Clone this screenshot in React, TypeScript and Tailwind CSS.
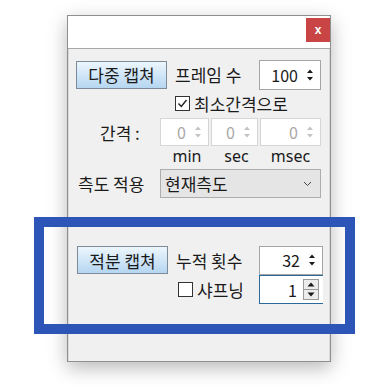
import React from "react";

const kr = { fontFamily: '"Noto Sans CJK KR", "Noto Sans", sans-serif' };

function Arrows({ color = "#1a1a1a" }: { color?: string }) {
  return (
    <svg width="8" height="16" viewBox="0 0 8 16" className="shrink-0">
      <path d="M1 6 L4 2.5 L7 6 Z" fill={color} />
      <path d="M1 10 L4 13.5 L7 10 Z" fill={color} />
    </svg>
  );
}

function Spinner({ value, width, disabled = false }: { value: string; width: string; disabled?: boolean }) {
  return (
    <div
      className={`flex h-full items-center justify-end gap-[8px] border bg-white pr-[6px] text-[16px] ${width} ${
        disabled ? "border-[#d6d6d6] text-[#a8a8a8]" : "border-[#a5a5a5] text-[#1a1a1a]"
      }`}
    >
      <span className="leading-none">{value}</span>
      <Arrows color={disabled ? "#c4c4c4" : "#1a1a1a"} />
    </div>
  );
}

function BlueButton({ label }: { label: string }) {
  return (
    <button className="flex h-[28px] w-[91px] items-center justify-center border border-[#7d8a97] bg-gradient-to-b from-[#edf6fd] to-[#b5d6f1] text-[17px] leading-none text-[#1a1a1a]">
      {label}
    </button>
  );
}

function CheckBox({ checked }: { checked: boolean }) {
  return (
    <span className="flex h-[15px] w-[15px] shrink-0 items-center justify-center border border-[#333] bg-white">
      {checked && (
        <svg width="11" height="11" viewBox="0 0 11 11">
          <path d="M1.5 5.5 L4.3 8.5 L9.5 2" fill="none" stroke="#222" strokeWidth="1.4" />
        </svg>
      )}
    </span>
  );
}

export default function App() {
  return (
    <div className="relative h-[385px] w-[386px] overflow-hidden bg-white" style={kr}>
      <div className="ml-[67px] mt-[15px] flex h-[347px] w-[264px] flex-col border border-[#8f8f8f] bg-[#f0f0f0] shadow-[0_6px_18px_rgba(0,0,0,0.28)]">
        {/* title bar */}
        <div className="flex h-[33px] items-start justify-end border-b border-[#a8a8a8] bg-white pt-[2px]">
          <div className="flex h-[24px] w-[24px] items-center justify-center bg-[#c94444] text-[12px] font-bold leading-none text-white" style={{ fontFamily: '"Liberation Sans", sans-serif' }}>
            x
          </div>
        </div>

        <div className="flex flex-1 flex-col border-x border-[#dadada] text-[#1a1a1a]">
          {/* 다중 캡쳐 row */}
          <div className="mt-[10px] flex h-[31px] items-center pl-[7px]">
            <BlueButton label="다중 캡쳐" />
            <span className="ml-[8px] w-[84px] text-[17px] leading-none">프레임 수</span>
            <div className="h-[30px]">
              <Spinner value="100" width="w-[62px]" />
            </div>
          </div>

          {/* 최소간격으로 */}
          <div className="mt-[5px] flex h-[16px] items-center gap-[4px] pl-[106px]">
            <CheckBox checked />
            <span className="text-[17px] leading-none">최소간격으로</span>
          </div>

          {/* 간격 */}
          <div className="mt-[7px] flex h-[28px] items-center pl-[31px]">
            <span className="w-[60px] text-[17px] leading-none">간격 :</span>
            <div className="flex h-full gap-[2px]">
              <Spinner value="0" width="w-[49px]" disabled />
              <Spinner value="0" width="w-[47px]" disabled />
              <Spinner value="0" width="w-[61px]" disabled />
            </div>
          </div>
          <div className="flex h-[20px] items-center pl-[91px] text-[16px] leading-none" style={{ fontFamily: '"Noto Sans", sans-serif' }}>
            <span className="w-[51px] pl-[3px] text-center">min</span>
            <span className="w-[49px] pl-[2px] text-center">sec</span>
            <span className="w-[61px] text-center">msec</span>
          </div>

          {/* 측도 적용 */}
          <div className="mt-[3px] flex h-[29px] items-center pl-[9px]">
            <span className="w-[82px] text-[17px] leading-none">측도 적용</span>
            <div className="flex h-full w-[161px] items-center justify-between border border-[#adadad] bg-[#e5e5e5] pl-[4px] pr-[8px]">
              <span className="text-[17px] leading-none">현재측도</span>
              <svg width="9" height="6" viewBox="0 0 9 6">
                <path d="M1 1 L4.5 4.5 L8 1" fill="none" stroke="#444" strokeWidth="1" />
              </svg>
            </div>
          </div>

          {/* 적분 캡쳐 row */}
          <div className="mt-[47px] flex h-[30px] items-center pl-[8px]">
            <BlueButton label="적분 캡쳐" />
            <span className="ml-[8px] w-[83px] text-[17px] leading-none">누적 횟수</span>
            <div className="h-[29px]">
              <Spinner value="32" width="w-[64px]" />
            </div>
          </div>

          {/* 샤프닝 */}
          <div className="flex h-[29px] items-center">
            <div className="flex w-[190px] items-center gap-[4px] pl-[109px]">
              <CheckBox checked={false} />
              <span className="text-[17px] leading-none">샤프닝</span>
            </div>
            <div className="flex h-full w-[64px] items-center justify-end gap-[6px] border-y border-l border-[#2a6a9a] bg-white pr-[4px] text-[16px]">
              <span className="leading-none">1</span>
              <div className="flex h-[21px] w-[16px] flex-col border border-[#9a9a9a] bg-[#ececec]">
                <div className="flex flex-1 items-center justify-center border-b border-[#9a9a9a]">
                  <svg width="8" height="5" viewBox="0 0 8 5"><path d="M0.5 4.5 L4 0.5 L7.5 4.5 Z" fill="#1a1a1a" /></svg>
                </div>
                <div className="flex flex-1 items-center justify-center">
                  <svg width="8" height="5" viewBox="0 0 8 5"><path d="M0.5 0.5 L4 4.5 L7.5 0.5 Z" fill="#1a1a1a" /></svg>
                </div>
              </div>
            </div>
          </div>
        </div>
      </div>

      {/* highlight overlay */}
      <div className="pointer-events-none absolute left-[34px] top-[217px] h-[117px] w-[321px] border-[10px] border-[#2d54b7]" />
    </div>
  );
}
